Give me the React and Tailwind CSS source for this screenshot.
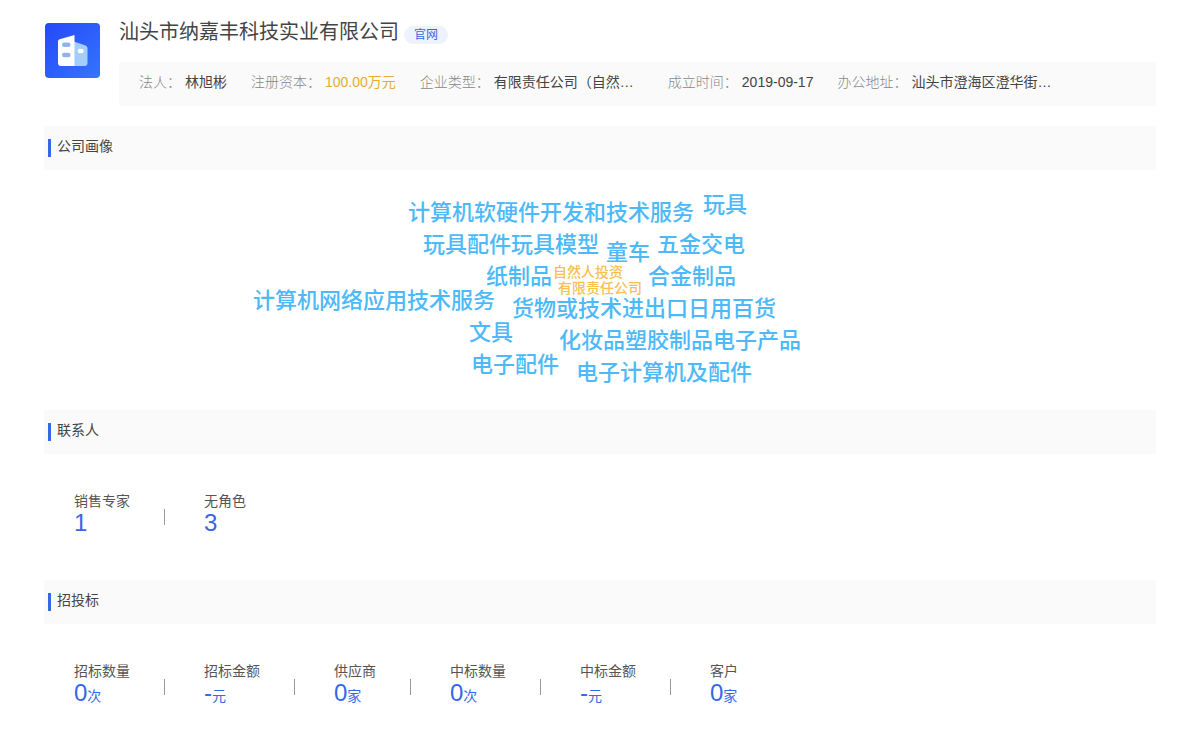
import React from 'react';

const companyInfo = [
  { label: '法人：', value: '林旭彬' },
  { label: '注册资本：', value: '100.00万元', highlight: true },
  { label: '企业类型：', value: '有限责任公司（自然…', fixed: true },
  { label: '成立时间：', value: '2019-09-17' },
  { label: '办公地址：', value: '汕头市澄海区澄华街…', fixed: true }
];

// x is measured from the centre of the cloud, y from its top
const words = [
  { text: '计算机软硬件开发和技术服务', x: -192, y: 32 },
  { text: '玩具', x: 103, y: 24 },
  { text: '玩具配件', x: -177, y: 64 },
  { text: '玩具模型', x: -89, y: 64 },
  { text: '童车', x: 6, y: 72 },
  { text: '五金交电', x: 57, y: 64 },
  { text: '纸制品', x: -114, y: 96 },
  { text: '自然人投资', x: -47, y: 94, small: true },
  { text: '合金制品', x: 48, y: 96 },
  { text: '有限责任公司', x: -42, y: 110, small: true },
  { text: '计算机网络应用技术服务', x: -347, y: 120 },
  { text: '货物或技术进出口', x: -88, y: 128 },
  { text: '日用百货', x: 88, y: 128 },
  { text: '文具', x: -131, y: 152 },
  { text: '化妆品', x: -41, y: 160 },
  { text: '塑胶制品', x: 25, y: 160 },
  { text: '电子产品', x: 113, y: 160 },
  { text: '电子配件', x: -129, y: 184 },
  { text: '电子计算机及配件', x: -24, y: 192 }
];

const contacts = [
  { label: '销售专家', value: '1' },
  { label: '无角色', value: '3' }
];

const bids = [
  { label: '招标数量', value: '0', unit: '次' },
  { label: '招标金额', value: '-', unit: '元' },
  { label: '供应商', value: '0', unit: '家' },
  { label: '中标数量', value: '0', unit: '次' },
  { label: '中标金额', value: '-', unit: '元' },
  { label: '客户', value: '0', unit: '家' }
];

const CompanyLogo = () => (
  <svg viewBox="0 0 55 55" className="w-[55px] h-[55px] shrink-0" aria-hidden="true">
    <defs>
      <linearGradient id="logoBg" x1="0" y1="0" x2="1" y2="1">
        <stop offset="0" stopColor="#2548fa" />
        <stop offset="1" stopColor="#3475fc" />
      </linearGradient>
    </defs>
    <rect width="55" height="55" rx="4" fill="url(#logoBg)" />
    <path d="M29 18.5 L40.5 22.5 Q42.5 23.2 42.5 25.2 V40 Q42.5 43 39.5 43 H29 Z" fill="#a3cdfb" />
    <path d="M13 18.5 Q13 16.8 14.6 16.2 L29.5 12 V43 H16 Q13 43 13 40 Z" fill="#fff" />
    <rect x="17" y="19.5" width="8.5" height="4.5" rx="2.2" fill="#91b2ec" />
    <rect x="17" y="29.8" width="8.5" height="4.5" rx="2.2" fill="#91b2ec" />
    <rect x="32.7" y="25.7" width="6" height="4.5" rx="2.2" fill="#fff" />
  </svg>
);

const SectionTitle = ({ children }) => (
  <div className="flex items-center h-11 pl-1 bg-[#fafafa]">
    <span className="w-[3px] h-[18px] bg-[#3468e8]"></span>
    <h2 className="ml-1.5 pb-1 text-sm text-[#444]">{children}</h2>
  </div>
);

const StatList = ({ items }) => (
  <dl className="flex px-[30px] pt-9">
    {items.map((item, index) => (
      <React.Fragment key={item.label}>
        {index > 0 && <div className="w-px h-4 mt-[19px] ml-[34px] mr-[39px] bg-[#999]"></div>}
        <div>
          <dt className="text-sm leading-[22px] text-[#555]">{item.label}</dt>
          <dd className="text-2xl leading-[22px] text-[#3468e8]">
            {item.value}
            {item.unit && <span className="text-sm leading-none">{item.unit}</span>}
          </dd>
        </div>
      </React.Fragment>
    ))}
  </dl>
);

const App = () => {
  return (
    <main
      lang="zh-CN"
      className="px-11 pb-11 bg-white font-['Liberation_Sans','Noto_Sans_CJK_SC',sans-serif]"
    >
      {/* Company header */}
      <header className="flex pt-[18px] pl-px">
        <div className="pt-[5px]">
          <CompanyLogo />
        </div>
        <div className="flex-1 min-w-0 ml-[19px]">
          <div className="flex items-center">
            <h1 className="text-xl leading-7 text-[#444]">汕头市纳嘉丰科技实业有限公司</h1>
            <a
              href="#"
              className="mt-1.5 ml-[5px] px-2.5 rounded-full bg-[#edf3fd] text-xs leading-[18px] text-[#3468e8]"
            >
              官网
            </a>
          </div>
          <dl className="flex flex-wrap gap-x-6 mt-4 px-5 pt-[9px] pb-[13px] bg-[#fafafa] text-sm leading-[22px]">
            {companyInfo.map((item) => (
              <div key={item.label} className="flex gap-1">
                <dt className="font-light text-[#888]">{item.label}</dt>
                <dd
                  className={`${item.highlight ? 'text-[#eba938]' : 'text-[#444]'} ${
                    item.fixed ? 'w-[150px] truncate' : ''
                  }`}
                >
                  {item.value}
                </dd>
              </div>
            ))}
          </dl>
        </div>
      </header>

      {/* Keyword cloud */}
      <section className="mt-5">
        <SectionTitle>公司画像</SectionTitle>
        <div className="relative h-60">
          {words.map((word) => (
            <span
              key={word.text}
              className={`absolute whitespace-nowrap ${
                word.small ? 'text-sm leading-4 text-[#f7c04f]' : 'text-[22px] leading-8 text-[#4db9f9]'
              } font-medium`}
              style={{ left: `calc(50% + ${word.x}px)`, top: word.small ? word.y : word.y - 5 }}
            >
              {word.text}
            </span>
          ))}
        </div>
      </section>

      {/* Contacts */}
      <section className="pb-[46px]">
        <SectionTitle>联系人</SectionTitle>
        <StatList items={contacts} />
      </section>

      {/* Bidding */}
      <section>
        <SectionTitle>招投标</SectionTitle>
        <StatList items={bids} />
      </section>
    </main>
  );
};

export default App;
